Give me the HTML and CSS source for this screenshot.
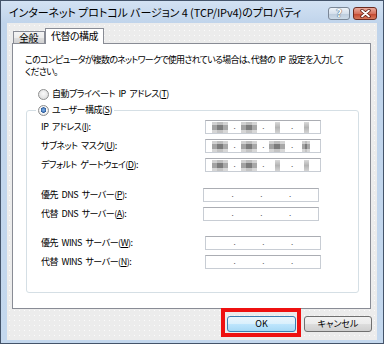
FILE: index.html
```html
<!DOCTYPE html>
<html lang="ja">
<head>
  <meta charset="utf-8">
  <title>インターネット プロトコル バージョン 4 (TCP/IPv4)のプロパティ</title>
  <link rel="stylesheet" href="styles.css">
</head>
<body>
  <div class="window">
    <div class="titlebar">
      <span class="title">インターネット プロトコル バージョン 4 (TCP/IPv4)のプロパティ</span>
      <div class="caption">
        <span class="cap-btn help">?</span>
        <span class="cap-btn close">
          <svg width="11" height="9" viewBox="0 0 11 9">
            <path d="M2 1.5 L9 7.5 M9 1.5 L2 7.5" stroke="#5b1a10" stroke-width="3.4" stroke-linecap="round"/>
            <path d="M2 1.5 L9 7.5 M9 1.5 L2 7.5" stroke="#fff" stroke-width="1.8" stroke-linecap="round"/>
          </svg>
        </span>
      </div>
    </div>

    <div class="client">
      <div class="tabs">
        <span class="tab">全般</span>
        <span class="tab active">代替の構成</span>
      </div>

      <div class="panel">
        <p class="intro">このコンピュータが複数のネットワークで使用されている場合は、代替の IP 設定を入力して<br>ください。</p>

        <div class="option"><span class="radio"></span>自動プライベート IP アドレス(<u>T</u>)</div>

        <fieldset class="group">
          <legend class="option"><span class="radio on"></span>ユーザー構成(<u>S</u>)</legend>

          <div class="block">
            <div class="row">
              <span class="label">IP アドレス(<u>I</u>):</span>
              <span class="ip">
                <span class="seg"><span class="mask m3"></span></span><span class="dot">.</span>
                <span class="seg"><span class="mask m3"></span></span><span class="dot">.</span>
                <span class="seg"><span class="mask m1"></span></span><span class="dot">.</span>
                <span class="seg"><span class="mask m1"></span></span>
              </span>
            </div>
            <div class="row">
              <span class="label">サブネット マスク(<u>U</u>):</span>
              <span class="ip">
                <span class="seg"><span class="mask m3"></span></span><span class="dot">.</span>
                <span class="seg"><span class="mask m3"></span></span><span class="dot">.</span>
                <span class="seg"><span class="mask m3"></span></span><span class="dot">.</span>
                <span class="seg"><span class="mask m2"></span></span>
              </span>
            </div>
            <div class="row">
              <span class="label">デフォルト ゲートウェイ(<u>D</u>):</span>
              <span class="ip">
                <span class="seg"><span class="mask m3"></span></span><span class="dot">.</span>
                <span class="seg"><span class="mask m3"></span></span><span class="dot">.</span>
                <span class="seg"><span class="mask m1"></span></span><span class="dot">.</span>
                <span class="seg"><span class="mask m1"></span></span>
              </span>
            </div>
          </div>

          <div class="block dns">
            <div class="row">
              <span class="label">優先 DNS サーバー(<u>P</u>):</span>
              <span class="ip">
                <span class="seg"></span><span class="dot">.</span>
                <span class="seg"></span><span class="dot">.</span>
                <span class="seg"></span><span class="dot">.</span>
                <span class="seg"></span>
              </span>
            </div>
            <div class="row">
              <span class="label">代替 DNS サーバー(<u>A</u>):</span>
              <span class="ip">
                <span class="seg"></span><span class="dot">.</span>
                <span class="seg"></span><span class="dot">.</span>
                <span class="seg"></span><span class="dot">.</span>
                <span class="seg"></span>
              </span>
            </div>
          </div>

          <div class="block wins">
            <div class="row">
              <span class="label">優先 WINS サーバー(<u>W</u>):</span>
              <span class="ip">
                <span class="seg"></span><span class="dot">.</span>
                <span class="seg"></span><span class="dot">.</span>
                <span class="seg"></span><span class="dot">.</span>
                <span class="seg"></span>
              </span>
            </div>
            <div class="row">
              <span class="label">代替 WINS サーバー(<u>N</u>):</span>
              <span class="ip">
                <span class="seg"></span><span class="dot">.</span>
                <span class="seg"></span><span class="dot">.</span>
                <span class="seg"></span><span class="dot">.</span>
                <span class="seg"></span>
              </span>
            </div>
          </div>
        </fieldset>
      </div>

      <div class="actions">
        <div class="highlight"><button class="btn ok">OK</button></div>
        <button class="btn cancel">キャンセル</button>
      </div>
    </div>
  </div>
</body>
</html>
```

FILE: styles.css
```css
* {
  box-sizing: border-box;
}
html,
body {
  margin: 0;
  padding: 0;
}
body {
  font-family: "Noto Sans CJK JP", sans-serif;
  font-size: 9px;
  line-height: 12px;
  letter-spacing: -.5px;
  word-spacing: 2px;
  font-feature-settings: "palt";
  color: #000;
}

/* window frame */
.window {
  width: 384px;
  height: 344px;
  display: flex;
  flex-direction: column;
  border: 1px solid #44546a;
  padding: 0 6px 3px;
  background: linear-gradient(#d3e2f3, #c0d4eb 22px, #c4d8ee);
}
.titlebar {
  height: 22px;
  margin: 0 -6px;
  padding: 0 6px 0 8px;
  display: flex;
  align-items: center;
  justify-content: space-between;
}
.title {
  font-size: 11px;
  letter-spacing: -.1px;
  word-spacing: 0;
  white-space: nowrap;
}
.caption {
  display: flex;
  gap: 3px;
  margin-top: 3px;
}
.cap-btn {
  height: 13px;
  display: flex;
  align-items: center;
  justify-content: center;
  border-radius: 3px;
}
.help {
  width: 22px;
  border: 1px solid #7b8797;
  background: linear-gradient(#eef3f9, #d6e0ec 50%, #bccbdc 51%, #cddbe9);
  color: #fff;
  font: bold 10px "DejaVu Sans", sans-serif;
  text-shadow: 0 0 1px #3b4a5e, 0 0 1px #3b4a5e;
}
.close {
  width: 24px;
  border: 1px solid #6b2a1f;
  background: linear-gradient(#eaaa9c, #d6725e 50%, #c2432c 51%, #d77a5e);
}

/* dialog body */
.client {
  flex: 1;
  display: flex;
  flex-direction: column;
  padding: 5px 6px 0 5px;
  background: radial-gradient(circle, rgba(255, 255, 255, .8) 0 .6px, transparent 1px) 0 0 / 5px 5px, #ececec;
}
.tabs {
  display: flex;
  align-items: flex-end;
  height: 15px;
  padding-left: 1px;
}
.tab {
  width: 32px;
  height: 12px;
  padding-left: 5px;
  border: 1px solid #898c95;
  border-bottom: 0;
  font-size: 10px;
  line-height: 11px;
  background: linear-gradient(#f4f4f4, #ececec 50%, #dedede 51%, #d2d2d2);
}
.tab.active {
  width: 59px;
  height: 16px;
  margin-bottom: -1px;
  padding-left: 0;
  text-align: center;
  line-height: 13px;
  background: #fff;
  position: relative;
  z-index: 1;
}
.panel {
  height: 266px;
  padding: 10px 0 0 12px;
  border: 1px solid #898c95;
  background: #fff;
}
.intro {
  margin: 0;
  letter-spacing: -.75px;
  white-space: nowrap;
}
.option {
  display: flex;
  align-items: center;
  height: 12px;
  margin: 10px 0 0 13px;
  white-space: nowrap;
}
.radio {
  width: 11px;
  height: 11px;
  margin-right: 3px;
  border: 1px solid #8e8f8f;
  border-radius: 50%;
  background: radial-gradient(circle at 50% 40%, #fafafa, #d6d6d6);
}
.radio.on {
  background: radial-gradient(circle at 50% 45%, #6ea0dc 0 1px, #2a5a9a 2.5px, #fafafa 3px, #d6d6d6);
}

/* user configuration group */
.group {
  margin: 4px 11px 0 1px;
  padding: 4px 0 23px 14px;
  border: 1px solid #d5dfe5;
  border-radius: 3px;
}
.group legend.option {
  margin: 0 0 0 -5px;
  padding: 0 2px;
}
.block {
  display: flex;
  flex-direction: column;
  gap: 5px;
}
.block.dns {
  margin-top: 16px;
}
.block.wins {
  margin-top: 15px;
}
.row {
  display: flex;
  align-items: center;
  height: 14px;
}
.label {
  width: 164px;
  white-space: nowrap;
}
.ip {
  width: 116px;
  height: 14px;
  display: flex;
  padding: 0 1px;
  border: 1px solid #c8cdd4;
  border-top-color: #abadb3;
  background: #fff;
}
.dns .ip {
  margin-left: -2px;
}
.seg {
  flex: 1;
  display: flex;
  justify-content: center;
  align-items: center;
}
.dot {
  width: 3px;
  font-size: 8px;
  line-height: 9px;
  color: #555;
  text-align: center;
}

/* masked (mosaic) address digits */
.mask {
  height: 11px;
  background:
    linear-gradient(rgba(255, 255, 255, .5) 0 30%, transparent 30% 70%, rgba(255, 255, 255, .55) 70%),
    linear-gradient(90deg, #a3a3a3 0 33%, #7c7c7c 33% 66%, #a8a8a8 66%);
}
.mask.m3 {
  width: 16px;
}
.mask.m2 {
  width: 8px;
}
.mask.m1 {
  width: 5px;
  background: linear-gradient(#dadada, #b4b4b4 50%, #d4d4d4);
}

/* buttons */
.actions {
  display: flex;
  justify-content: flex-end;
  align-items: flex-start;
  gap: 3px;
  margin: -1px -1px 0 0;
}
.highlight {
  padding: 4px 1px 1px 2px;
  border: 4px solid #ee1111;
}
.btn {
  height: 16px;
  padding: 0;
  font: inherit;
  line-height: 14px;
  border: 1px solid #707070;
  border-radius: 3px;
  background: linear-gradient(#f2f2f2, #ebebeb 50%, #dddddd 51%, #cfcfcf);
}
.btn.ok {
  width: 69px;
  border-color: #3c7fb1;
  background: linear-gradient(#eaf6fd, #d9f0fc 50%, #bee6fd 51%, #a7d9f5);
}
.btn.cancel {
  width: 68px;
  margin-top: 8px;
}
```
